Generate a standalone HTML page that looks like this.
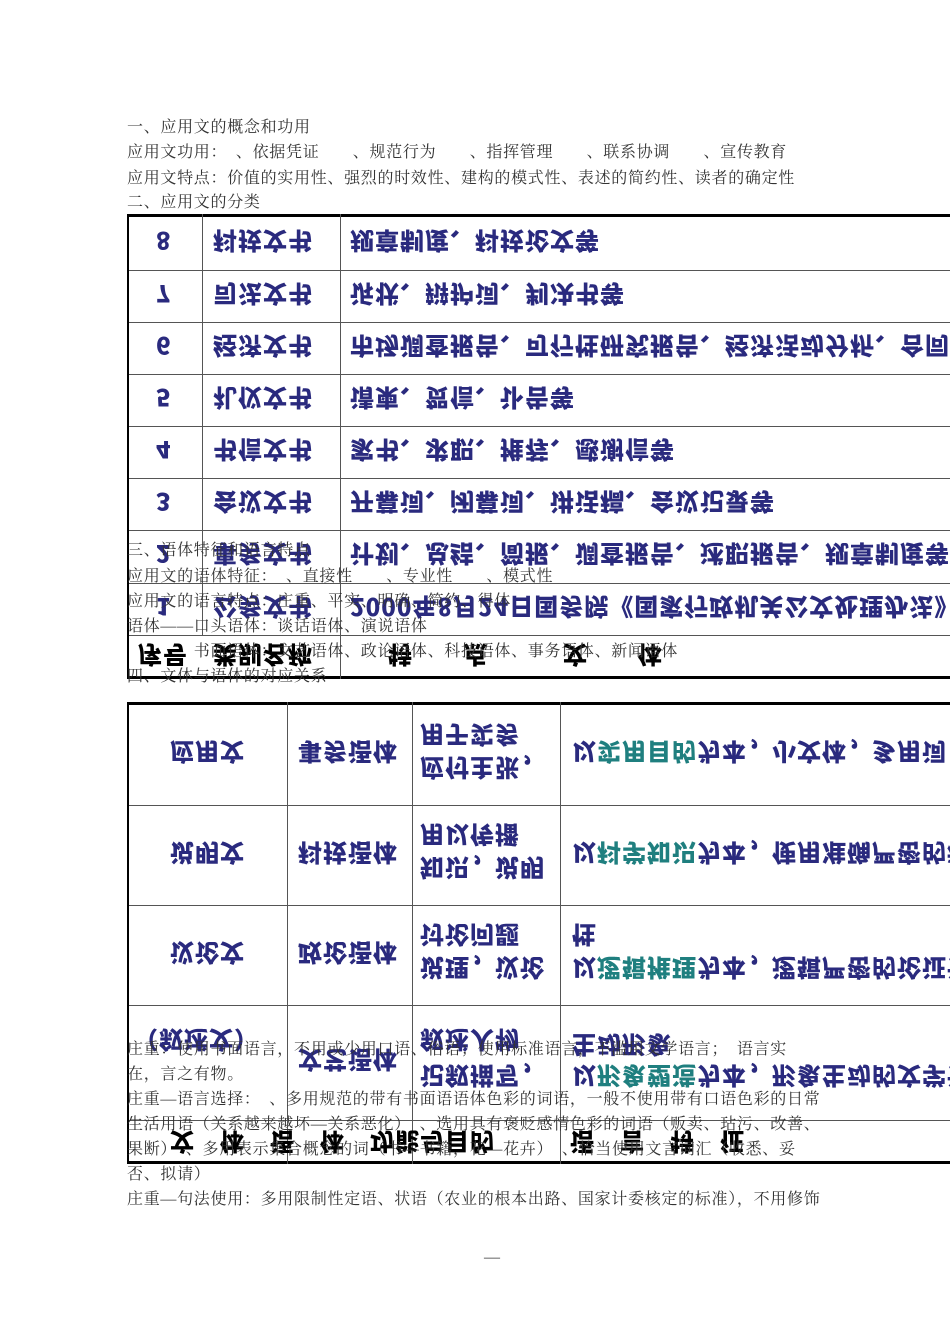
<!DOCTYPE html>
<html><head><meta charset="utf-8"><style>
body{margin:0;width:950px;height:1344px;background:#fff;position:relative;overflow:hidden;font-family:"Liberation Serif","Noto Serif CJK SC","Noto Sans CJK SC",serif}
.t{position:absolute;left:127px;font-size:16px;letter-spacing:0.7px;color:#333;white-space:nowrap;line-height:18px}
.h{position:absolute;background:#555;height:1px}
.v{position:absolute;background:#555;width:1px}
.f{position:absolute;transform:scaleY(-1);font-family:"Noto Sans CJK SC",sans-serif;font-weight:900;color:#2a2a7e;font-size:24px;white-space:nowrap;line-height:26px;letter-spacing:1px}
.k{color:#000}
.g{color:#1f7f7f}
</style></head><body>
<div class="t" style="top:119px">一、应用文的概念和功用</div>
<div class="t" style="top:144px">应用文功用：　、依据凭证　　、规范行为　　、指挥管理　　、联系协调　　、宣传教育</div>
<div class="t" style="top:170px">应用文特点：价值的实用性、强烈的时效性、建构的模式性、表述的简约性、读者的确定性</div>
<div class="t" style="top:194px">二、应用文的分类</div>

<div class="h" style="left:127px;top:214px;width:823px;height:3px;background:#000"></div>
<div class="h" style="left:127px;top:270px;width:823px"></div>
<div class="h" style="left:127px;top:322px;width:823px"></div>
<div class="h" style="left:127px;top:374px;width:823px"></div>
<div class="h" style="left:127px;top:426px;width:823px"></div>
<div class="h" style="left:127px;top:478px;width:823px"></div>
<div class="h" style="left:127px;top:530px;width:823px"></div>
<div class="h" style="left:127px;top:583px;width:823px"></div>
<div class="h" style="left:127px;top:635px;width:823px"></div>
<div class="h" style="left:127px;top:676px;width:823px;height:3px;background:#000"></div>
<div class="v" style="left:127px;top:214px;height:465px;width:2px;background:#000"></div>
<div class="v" style="left:202px;top:214px;height:421px"></div>
<div class="v" style="left:340px;top:214px;height:465px"></div>

<div class="f" style="left:156px;top:229px">8</div><div class="f" style="left:213px;top:229px">科技文书</div><div class="f" style="left:350px;top:229px">规章制度、科技论文等</div>
<div class="f" style="left:156px;top:282px">7</div><div class="f" style="left:213px;top:282px">司法文书</div><div class="f" style="left:350px;top:282px">诉状、辩护词、判决书等</div>
<div class="f" style="left:156px;top:334px">6</div><div class="f" style="left:213px;top:334px">经济文书</div><div class="f" style="left:350px;top:334px">市场调查报告、可行性研究报告、经济活动分析、合同等</div>
<div class="f" style="left:156px;top:386px">5</div><div class="f" style="left:213px;top:386px">礼仪文书</div><div class="f" style="left:350px;top:386px">请柬、贺信、讣告等</div>
<div class="f" style="left:156px;top:438px">4</div><div class="f" style="left:213px;top:438px">书信文书</div><div class="f" style="left:350px;top:438px">家书、求职、推荐、感谢信等</div>
<div class="f" style="left:156px;top:490px">3</div><div class="f" style="left:213px;top:490px">会议文书</div><div class="f" style="left:350px;top:490px">开幕词、闭幕词、讲话稿、会议记录等</div>
<div class="f" style="left:156px;top:542px">2</div><div class="f" style="left:213px;top:542px">事务文书</div><div class="f" style="left:350px;top:542px">计划、总结、简报、调查报告、述职报告、规章制度等</div>
<div class="f" style="left:156px;top:595px">1</div><div class="f" style="left:213px;top:595px">公务文书</div><div class="f" style="left:350px;top:595px">2000年8月24日国务院《国家行政机关公文处理办法》</div>
<div class="f k" style="left:138px;top:643px">序号　类别名称　　　特　　点　　　文　　体</div>

<div class="t" style="top:542px">三、语体特征和语言特点</div>
<div class="t" style="top:568px">应用文的语体特征：　、直接性　　、专业性　　、模式性</div>
<div class="t" style="top:593px">应用文的语言特点：庄重、平实、明确、简约、得体</div>
<div class="t" style="top:618px">语体——口头语体：谈话语体、演说语体</div>
<div class="t" style="top:643px">　　　　书面语体：文艺语体、政论语体、科技语体、事务语体、新闻语体</div>
<div class="t" style="top:668px">四、文体与语体的对应关系</div>

<div class="h" style="left:127px;top:702px;width:823px;height:3px;background:#000"></div>
<div class="h" style="left:127px;top:805px;width:823px"></div>
<div class="h" style="left:127px;top:905px;width:823px"></div>
<div class="h" style="left:127px;top:1005px;width:823px"></div>
<div class="h" style="left:127px;top:1120px;width:823px"></div>
<div class="h" style="left:127px;top:1161px;width:823px;height:3px;background:#000"></div>
<div class="v" style="left:127px;top:702px;height:462px;width:2px;background:#000"></div>
<div class="v" style="left:287px;top:702px;height:462px"></div>
<div class="v" style="left:412px;top:702px;height:462px"></div>
<div class="v" style="left:560px;top:702px;height:462px"></div>

<div class="f" style="left:170px;top:740px">应用文</div><div class="f" style="left:298px;top:740px">事务语体</div><div class="f" style="left:420px;top:723px">用于实务</div><div class="f" style="left:420px;top:756px">应付主张，</div><div class="f" style="left:572px;top:740px">以<span class="g">实用目的</span>为本，小文体，多用词，</div>
<div class="f" style="left:170px;top:841px">说明文</div><div class="f" style="left:298px;top:841px">科技语体</div><div class="f" style="left:420px;top:823px">用以传播</div><div class="f" style="left:420px;top:856px">知识，说明</div><div class="f" style="left:572px;top:841px">以<span class="g">科学知识</span>为本，使用准确严密的科学</div>
<div class="f" style="left:170px;top:941px">议论文</div><div class="f" style="left:298px;top:941px">政论语体</div><div class="f" style="left:420px;top:923px">讨论问题</div><div class="f" style="left:420px;top:956px">说理，议论</div><div class="f" style="left:572px;top:923px">性</div><div class="f" style="left:572px;top:956px">以<span class="g">逻辑推理</span>为本，逻辑严密的论证语言</div>
<div class="f" style="left:134px;top:1028px">（叙述文）</div><div class="f" style="left:298px;top:1048px">文艺语体</div><div class="f" style="left:420px;top:1028px">叙述人物</div><div class="f" style="left:420px;top:1064px">记叙描写，</div><div class="f" style="left:572px;top:1033px">生动形象</div><div class="f" style="left:572px;top:1064px">以<span class="g">形象塑造</span>为本，形象生动的文学语言</div>
<div class="f k" style="left:170px;top:1130px">文　体　语　体　功能与目的　　　语　言　特　征</div>

<div class="t" style="top:1041px">庄重：使用书面语言，不用或少用口语、俗语；使用标准语言，不滥用文学语言；　语言实</div>
<div class="t" style="top:1066px">在，言之有物。</div>
<div class="t" style="top:1091px">庄重—语言选择：　、多用规范的带有书面语语体色彩的词语，一般不使用带有口语色彩的日常</div>
<div class="t" style="top:1116px">生活用语（关系越来越坏—关系恶化）　、选用具有褒贬感情色彩的词语（贩卖、玷污、改善、</div>
<div class="t" style="top:1141px">果断）　、多用表示集合概念的词（书—书籍，花—花卉）　、恰当使用文言词汇（收悉、妥</div>
<div class="t" style="top:1166px">否、拟请）</div>
<div class="t" style="top:1191px">庄重—句法使用：多用限制性定语、状语（农业的根本出路、国家计委核定的标准），不用修饰</div>
<div class="t" style="left:484px;top:1249px">—</div>
</body></html>
